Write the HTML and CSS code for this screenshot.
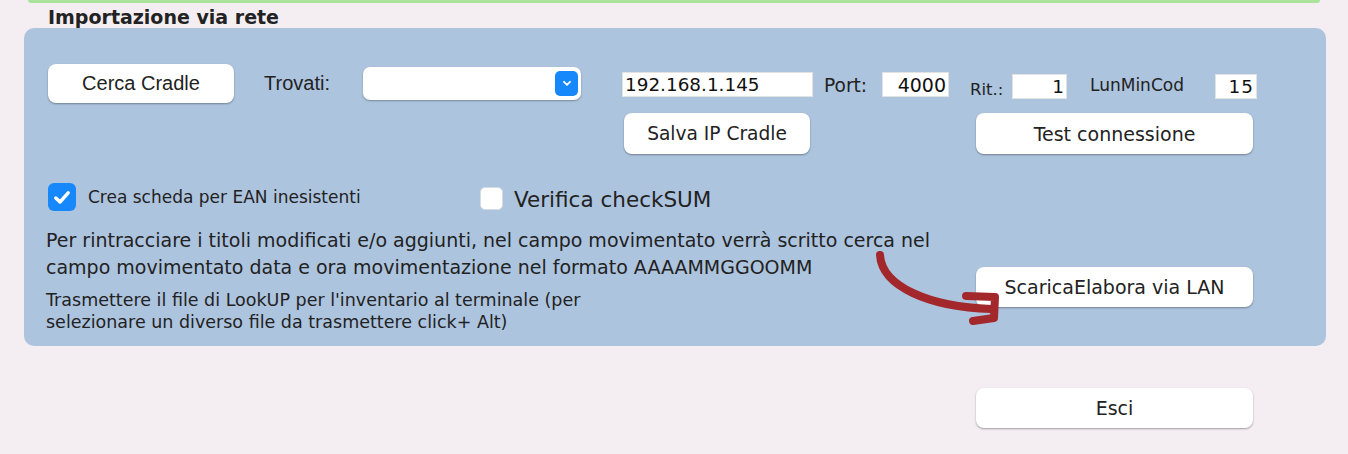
FILE: index.html
```html
<!doctype html>
<html lang="it">
<head>
  <meta charset="utf-8">
  <title>Importazione via rete</title>
  <link rel="stylesheet" href="styles.css">
</head>
<body>
<div class="topbar"></div>
<div class="title">Importazione via rete</div>

<div class="panel">
  <div class="row1">
    <button class="btn btn-cerca">Cerca Cradle</button>
    <span class="lbl lbl-trovati">Trovati:</span>
    <div class="select">
      <span class="chev">
        <svg width="10" height="7" viewBox="0 0 10 7"><path d="M2 1.8 L5 4.8 L8 1.8" fill="none" stroke="#fff" stroke-width="1.8" stroke-linecap="round" stroke-linejoin="round"/></svg>
      </span>
    </div>
    <input class="field f-ip" type="text" value="192.168.1.145">
    <span class="lbl lbl-port">Port:</span>
    <input class="field f-port num" type="text" value="4000">
    <span class="lbl lbl-rit">Rit.:</span>
    <input class="field f-rit num" type="text" value="1">
    <span class="lbl lbl-lmc">LunMinCod</span>
    <input class="field f-lmc num" type="text" value="15">
  </div>

  <div class="row2">
    <button class="btn btn-salva">Salva IP Cradle</button>
    <button class="btn btn-test">Test connessione</button>
  </div>

  <div class="row3">
    <span class="check on">
      <svg width="18" height="15" viewBox="0 0 18 15"><path d="M2.8 8 L7 12 L15.2 2.8" fill="none" stroke="#fff" stroke-width="3.4" stroke-linecap="round" stroke-linejoin="round"/></svg>
    </span>
    <span class="chk-lbl small">Crea scheda per EAN inesistenti</span>
    <span class="check off"></span>
    <span class="chk-lbl big">Verifica checkSUM</span>
  </div>

  <div class="row4">
    <div class="texts">
      <p class="note">Per rintracciare i titoli modificati e/o aggiunti, nel campo movimentato verrà scritto cerca nel campo movimentato data e ora movimentazione nel formato AAAAMMGGOOMM</p>
      <p class="note2">Trasmettere il file di LookUP per l'inventario al terminale (per selezionare un diverso file da trasmettere click+ Alt)</p>
    </div>
    <button class="btn btn-lan">ScaricaElabora via LAN</button>
  </div>
</div>

<div class="footer">
  <button class="btn btn-esci">Esci</button>
</div>

<svg class="arrow" width="1348" height="454" viewBox="0 0 1348 454">
  <path d="M880 255 C882 287 930 307 991 309" fill="none" stroke="#a3282b" stroke-width="8" stroke-linecap="round"/>
  <path d="M966 296 L995 297 L994 318 L973 321" fill="none" stroke="#a3282b" stroke-width="8" stroke-linecap="round" stroke-linejoin="round"/>
</svg>
</body>
</html>
```

FILE: styles.css
```css
body {
  margin: 0;
  background-color: #f4eef2;
  font-family: "DejaVu Sans", sans-serif;
  color: #222;
  position: relative;
  height: 454px;
  overflow: hidden;
}

.topbar {
  margin: 0 28px 0 28px;
  height: 3px;
  background: #a9e39c;
  border-radius: 0 0 4px 4px;
}

.title {
  margin: 3px 0 0 48px;
  height: 22px;
  line-height: 22px;
  font-weight: bold;
  font-size: 19px;
  color: #222;
}

.panel {
  margin: 0 22px 0 24px;
  height: 318px;
  box-sizing: border-box;
  background: #adc4df;
  border-radius: 10px;
  padding: 36px 0 0 24px;
}

.btn {
  flex-shrink: 0;
  background: #fff;
  border: none;
  border-radius: 8px;
  box-shadow: 0 1px 2px rgba(0,0,0,0.35);
  font-family: "DejaVu Sans", sans-serif;
  font-size: 19px;
  color: #222;
  padding: 0;
}

.row1 {
  display: flex;
  align-items: flex-start;
  height: 39px;
}
.row1 > * { flex-shrink: 0; }
.btn-cerca {
  width: 186px;
  height: 39px;
  font-family: "Liberation Sans", Arial, sans-serif;
  font-size: 20px;
}
.lbl {
  font-size: 17px;
  line-height: 20px;
  color: #222;
}
.lbl-trovati {
  margin: 9px 0 0 30px;
  width: 99px;
  font-family: "Liberation Sans", Arial, sans-serif;
  font-size: 20px;
}
.select {
  margin-top: 3px;
  width: 218px;
  height: 33px;
  background: #fff;
  border-radius: 7px;
  box-shadow: 0 1px 2px rgba(0,0,0,0.3);
  display: flex;
  justify-content: flex-end;
  align-items: center;
  padding-right: 3px;
  box-sizing: border-box;
}
.chev {
  width: 23px;
  height: 25px;
  background: #1787fc;
  border-radius: 5px;
  display: flex;
  align-items: center;
  justify-content: center;
}
.field {
  height: 25px;
  box-sizing: border-box;
  border: 1px solid #e2e2e2;
  background: #fff;
  font-family: "DejaVu Sans", sans-serif;
  font-size: 18.4px;
  color: #111;
  padding: 0 2px;
  margin-top: 8px;
}
.num { text-align: right; }
.f-ip { margin-left: 41px; width: 191px; }
.lbl-port { margin: 12px 0 0 11px; width: 58px; font-size: 18.6px; }
.f-port { width: 67px; font-size: 19px; }
.lbl-rit { margin: 16px 0 0 21px; width: 42px; font-size: 16.5px; }
.f-rit { width: 55px; margin-top: 10px; }
.lbl-lmc { margin: 11px 0 0 23px; width: 125px; }
.f-lmc { width: 42px; margin-top: 10px; letter-spacing: 1px; }

.row2 {
  display: flex;
  margin-top: 10px;
  height: 41px;
}
.btn-salva { margin-left: 576px; width: 186px; height: 41px; font-size: 18.6px; }
.btn-test { margin-left: 166px; width: 277px; height: 41px; }

.row3 {
  display: flex;
  align-items: center;
  margin-top: 29px;
  height: 28px;
}
.check {
  flex-shrink: 0;
  box-sizing: border-box;
  display: flex;
  align-items: center;
  justify-content: center;
}
.check.on {
  width: 28px;
  height: 28px;
  background: #1787fc;
  border-radius: 6px;
}
.check.off {
  width: 23px;
  height: 23px;
  background: #fff;
  border: 1px solid #d6dbe2;
  border-radius: 5px;
  margin-top: 3px;
}
.chk-lbl.small { margin-left: 12px; width: 392px; font-size: 17px; }
.chk-lbl.big { margin-left: 11px; font-size: 21.5px; margin-top: 4px; }

.row4 {
  display: flex;
  margin-top: 16px;
}
.texts { width: 905px; margin-left: -2px; flex-shrink: 0; }
.note {
  margin: 0;
  font-size: 19px;
  line-height: 27px;
}
.note2 {
  margin: 8px 0 0 0;
  font-size: 17.5px;
  line-height: 22px;
  width: 545px;
}
.btn-lan {
  margin: 40px 0 0 25px;
  width: 277px;
  height: 40px;
}

.footer {
  display: flex;
  padding: 42px 0 0 976px;
}
.btn-esci { width: 277px; height: 40px; }

.arrow {
  position: absolute;
  left: 0;
  top: 0;
  pointer-events: none;
}
```
